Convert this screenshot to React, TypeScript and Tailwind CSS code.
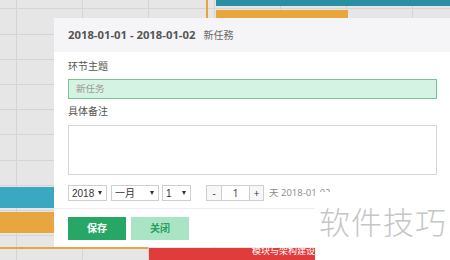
const cjk = "font-['Open_Sans','Noto_Sans_CJK_SC',sans-serif]";

const rows = [8, 34, 59, 84, 109, 134, 160, 185, 210, 235];
const cols = [16, 82, 148, 214, 280, 346, 412];

function GanttBackdrop() {
  return (
    <div className="absolute inset-0 bg-[#e6e6e6]">
      {rows.map((y) => (
        <div key={y} className="absolute left-0 right-0 h-px bg-[#d5d5d5]" style={{ top: y }} />
      ))}
      {cols.map((x) => (
        <div key={x} className="absolute top-0 bottom-0 w-px bg-[#d5d5d5]" style={{ left: x }} />
      ))}
      {/* bars peeking around the dialog */}
      <div className="absolute left-[206px] top-0 h-[18px] w-[2px] bg-[#e8a43c]" />
      <div className="absolute left-[216px] top-0 h-[6px] w-[240px] bg-[#2a8fa2]" />
      <div className="absolute left-[216px] top-[10px] h-[8px] w-[132px] bg-[#e8a63e]" />
      <div className="absolute left-0 top-[187px] h-[21px] w-[60px] bg-[#3aa8c0]" />
      <div className="absolute left-0 top-[212px] h-[21px] w-[60px] bg-[#e8a640]" />
      <div className="absolute left-0 top-[247px] h-[2px] w-[148px] bg-[#e8a640]" />
      <div className="absolute left-[149px] top-[248px] flex h-[14px] w-[170px] items-start justify-end bg-[#e03c3c] pr-[4px]">
        <span className={`${cjk} -mt-[3px] text-[9px] leading-[12px] text-white`}>模块与架构建设</span>
      </div>
    </div>
  );
}

function Caret() {
  return <span className="h-0 w-0 border-x-[2.5px] border-t-[4px] border-x-transparent border-t-[#333]" />;
}

function Select({ label, width }: { label: string; width: string }) {
  return (
    <div className={`flex h-[16px] ${width} items-center justify-between border border-[#cfcfcf] bg-white pl-[3px] pr-[4px]`}>
      <span className="font-['Liberation_Sans','Noto_Sans_CJK_SC',sans-serif] text-[10px] text-[#333]">{label}</span>
      <Caret />
    </div>
  );
}

export default function App() {
  return (
    <div className="relative h-[260px] w-[450px] overflow-hidden">
      <GanttBackdrop />

      {/* task dialog */}
      <div className={`${cjk} absolute left-[54px] top-[18px] flex w-[400px] flex-col bg-white`}>
        <div className="flex h-[34px] items-center gap-[8px] bg-[#f5f5f7] pl-[14px]">
          <span className="text-[11.3px] font-bold text-[#555]">2018-01-01 - 2018-01-02</span>
          <span className="text-[10px] text-[#666]">新任務</span>
        </div>

        <div className="flex flex-col pl-[14px] pr-[17px] pt-[6px]">
          <div className="h-[16px] text-[10px] leading-[16px] text-[#555]">环节主题</div>
          <div className="mt-[5px] flex h-[20px] items-center border border-[#74c496] bg-[#d5f3e3] pl-[7px] text-[9.5px] text-[#999]">
            新任务
          </div>
          <div className="mt-[4px] h-[16px] text-[10px] leading-[16px] text-[#555]">具体备注</div>
          <div className="mt-[6px] h-[50px] border border-[#d6d6d6] bg-white" />

          <div className="mt-[10px] flex h-[16px] items-center">
            <Select label="2018" width="w-[39px]" />
            <div className="ml-[4px]">
              <Select label="一月" width="w-[48px]" />
            </div>
            <div className="ml-[3px]">
              <Select label="1" width="w-[29px]" />
            </div>
            <div className="ml-[15px] flex h-[16px] border border-[#cfcfcf] text-[10px] text-[#333]">
              <span className="flex w-[14px] items-center justify-center bg-[#f7f7f7]">-</span>
              <span className="flex w-[29px] items-center justify-center border-x border-[#cfcfcf]">1</span>
              <span className="flex w-[13px] items-center justify-center bg-[#f7f7f7]">+</span>
            </div>
            <span className="ml-[5px] whitespace-nowrap text-[9.5px] text-[#888]">天 2018-01-02</span>
          </div>
        </div>

        <div className="mt-[7px] flex gap-[5px] border-t border-[#eeeeee] pb-[7px] pl-[14px] pt-[8px]">
          <button className="h-[23px] w-[58px] bg-[#26a765] text-[10px] font-bold text-white">保存</button>
          <button className="h-[23px] w-[58px] bg-[#a9e5c5] text-[10px] font-bold text-[#2a9e62]">关闭</button>
        </div>
      </div>

      {/* watermark */}
      <div className="absolute left-[315px] top-[192px] flex h-[70px] w-[140px] items-start bg-white pl-[4px] pt-[9px]">
        <span className="font-['Noto_Sans_CJK_SC',sans-serif] text-[31px] font-light leading-[40px] tracking-[1px] text-[#c6c6c6]">软件技巧</span>
      </div>
    </div>
  );
}
